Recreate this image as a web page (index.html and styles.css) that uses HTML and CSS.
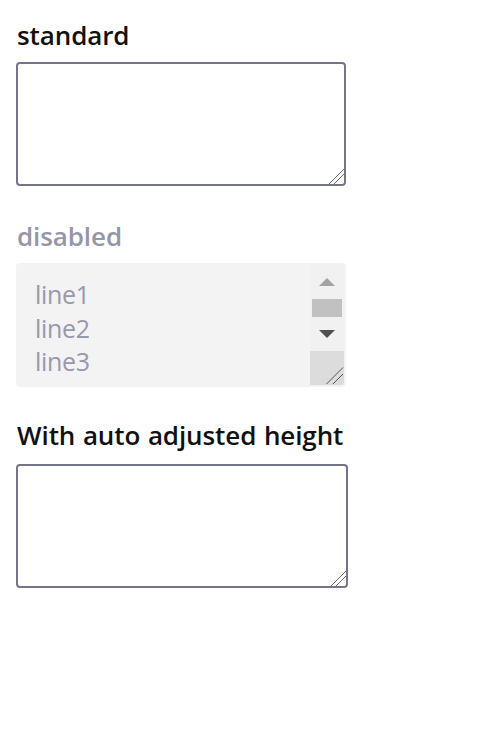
FILE: index.html
```html
<!DOCTYPE html>
<html lang="en">
<head>
<meta charset="utf-8">
<title>Textarea</title>
<link rel="stylesheet" href="styles.css">
</head>
<body>
  <div class="field field-standard">
    <label class="label" for="ta1">standard</label>
    <textarea id="ta1" class="textarea"></textarea>
  </div>

  <div class="field field-disabled">
    <label class="label label-disabled">disabled</label>
    <div class="textarea-disabled">
      <div class="disabled-text">line1<br>line2<br>line3</div>
      <div class="scrollbar">
        <div class="sb-btn"><span class="arrow-up"></span></div>
        <div class="sb-track"><span class="sb-thumb"></span></div>
        <div class="sb-btn"><span class="arrow-down"></span></div>
        <div class="sb-resizer">
          <svg width="34" height="34" viewBox="0 0 34 34">
            <line x1="16.5" y1="33" x2="33" y2="16.5" stroke="#555" stroke-width="1"/>
            <line x1="23" y1="33" x2="33" y2="23" stroke="#555" stroke-width="1"/>
          </svg>
        </div>
      </div>
    </div>
  </div>

  <div class="field field-auto">
    <label class="label label-auto" for="ta3">With auto adjusted height</label>
    <textarea id="ta3" class="textarea textarea-wide"></textarea>
  </div>
</body>
</html>
```
FILE: styles.css
```css
html, body {
  margin: 0;
  background: #ffffff;
}

body {
  padding: 19px 16px 0;
  font-family: "Open Sans", "Noto Sans", sans-serif;
}

.field {
  display: flex;
  flex-direction: column;
  align-items: flex-start;
}

.field-standard {
  margin-bottom: 34px;
}

.field-disabled {
  margin-bottom: 32px;
}

.label {
  display: block;
  font-size: 26px;
  font-weight: 600;
  line-height: 32px;
  letter-spacing: -0.1px;
  word-spacing: 1px;
  color: #111111;
  margin: 0 0 11px 1px;
}

.label-disabled {
  color: #9696aa;
}

.label-auto {
  margin-bottom: 13px;
}

.textarea {
  box-sizing: border-box;
  width: 330px;
  height: 124px;
  margin: 0;
  padding: 6px 10px;
  border: 2px solid #75758a;
  border-radius: 4px;
  background: #ffffff;
  font-family: "Open Sans", sans-serif;
  font-size: 24px;
  resize: both;
  outline: none;
}

.textarea::-webkit-scrollbar {
  width: 18px;
  height: 18px;
}

.textarea::-webkit-resizer {
  background: linear-gradient(135deg,
    transparent 0 48%,
    #6a6a6a 48% 52.5%,
    transparent 52.5% 64.5%,
    #6a6a6a 64.5% 69%,
    transparent 69%);
}

.textarea-wide {
  width: 332px;
}

.textarea-disabled {
  box-sizing: border-box;
  width: 330px;
  height: 124px;
  border: 2px solid #f3f3f3;
  border-radius: 4px;
  background: #f3f3f3;
  display: flex;
  overflow: hidden;
}

.disabled-text {
  flex: 1;
  padding: 13px 0 0 17px;
  font-size: 25px;
  line-height: 33.7px;
  letter-spacing: -0.3px;
  color: #9898ab;
  overflow: hidden;
}

.scrollbar {
  width: 34px;
  display: flex;
  flex-direction: column;
  background: #f1f1f1;
}

.sb-btn {
  height: 34px;
  display: flex;
  align-items: center;
  justify-content: center;
}

.arrow-up {
  width: 0;
  height: 0;
  border-left: 8px solid transparent;
  border-right: 8px solid transparent;
  border-bottom: 8px solid #a3a3a3;
}

.arrow-down {
  width: 0;
  height: 0;
  border-left: 8px solid transparent;
  border-right: 8px solid transparent;
  border-top: 8px solid #505050;
}

.sb-track {
  height: 18px;
  padding: 0 2px;
  display: flex;
}

.sb-thumb {
  flex: 1;
  background: #c1c1c1;
}

.sb-resizer {
  height: 34px;
  background: #dcdcdc;
  display: flex;
}
```
